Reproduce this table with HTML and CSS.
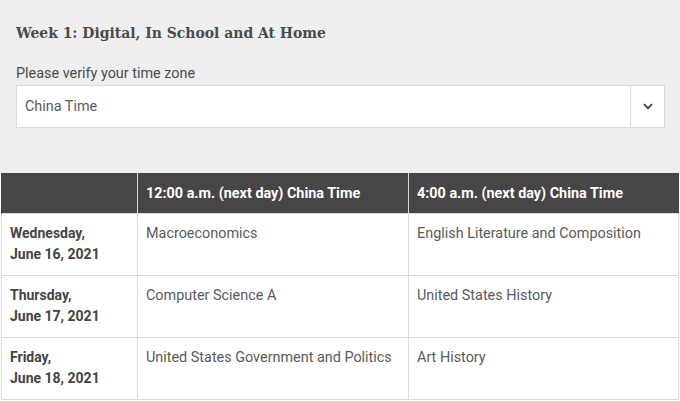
FILE: index.html
```html
<!DOCTYPE html>
<html>
<head>
<meta charset="utf-8">
<link rel="stylesheet" href="styles.css">
</head>
<body>
<div class="panel">
  <h2 class="title">Week 1: Digital, In School and At Home</h2>
  <div class="label">Please verify your time zone</div>
  <div class="select">
    <div class="select-value">China Time</div>
    <div class="select-btn">
      <svg width="10" height="7" viewBox="0 0 10 7"><path d="M1 1.2 L5 5.2 L9 1.2" fill="none" stroke="#444" stroke-width="1.8"/></svg>
    </div>
  </div>
</div>
<table class="sched">
  <thead>
    <tr><th class="c0"></th><th class="c1">12:00 a.m. (next day) China Time</th><th class="c2">4:00 a.m. (next day) China Time</th></tr>
  </thead>
  <tbody>
    <tr><td class="day">Wednesday,<br>June 16, 2021</td><td>Macroeconomics</td><td>English Literature and Composition</td></tr>
    <tr><td class="day">Thursday,<br>June 17, 2021</td><td>Computer Science A</td><td>United States History</td></tr>
    <tr><td class="day">Friday,<br>June 18, 2021</td><td>United States Government and Politics</td><td>Art History</td></tr>
  </tbody>
</table>
</body>
</html>
```
FILE: styles.css
```css
html, body { margin: 0; padding: 0; background: #fff; }
body { font-family: Roboto, "Noto Sans", sans-serif; color: #555; width: 680px; overflow: hidden; }
.panel { background: #efeff0; padding: 22px 15px 45px 16px; }
.title { margin: 0; font-family: "DejaVu Serif Condensed", "DejaVu Serif", serif; font-stretch: semi-condensed; font-weight: bold; font-size: 15.5px; line-height: 22px; color: #4a4a4a; }
.label { margin-top: 22px; font-size: 14.4px; line-height: 16px; color: #4a4a4a; }
.select { margin-top: 3px; display: flex; height: 41px; background: #fff; border: 1px solid #d9d9d9; }
.select-value { flex: 1; padding-left: 8px; font-size: 14.4px; line-height: 41px; color: #5a5a5a; }
.select-btn { width: 33px; border-left: 1px solid #d9d9d9; display: flex; align-items: center; justify-content: center; }
.sched { border-collapse: collapse; margin-left: 1px; width: 678px; table-layout: fixed; }
.sched th { background: #474545; color: #fff; font-size: 14.4px; font-weight: bold; text-align: left; height: 40px; padding: 0 8px; border-left: 1px solid #d9d9d9; vertical-align: middle; }
.sched th.c0 { border-left: 1px solid #474545; width: 119px; }
.sched th.c1 { width: 254px; }
.sched td { border: 1px solid #d9d9d9; height: 62px; vertical-align: top; padding: 9px 8px 0 8px; font-size: 14.4px; line-height: 21px; color: #5a5a5a; box-sizing: border-box; }
.sched td.day { font-weight: bold; font-size: 14px; color: #444; padding-top: 9px; }
```
